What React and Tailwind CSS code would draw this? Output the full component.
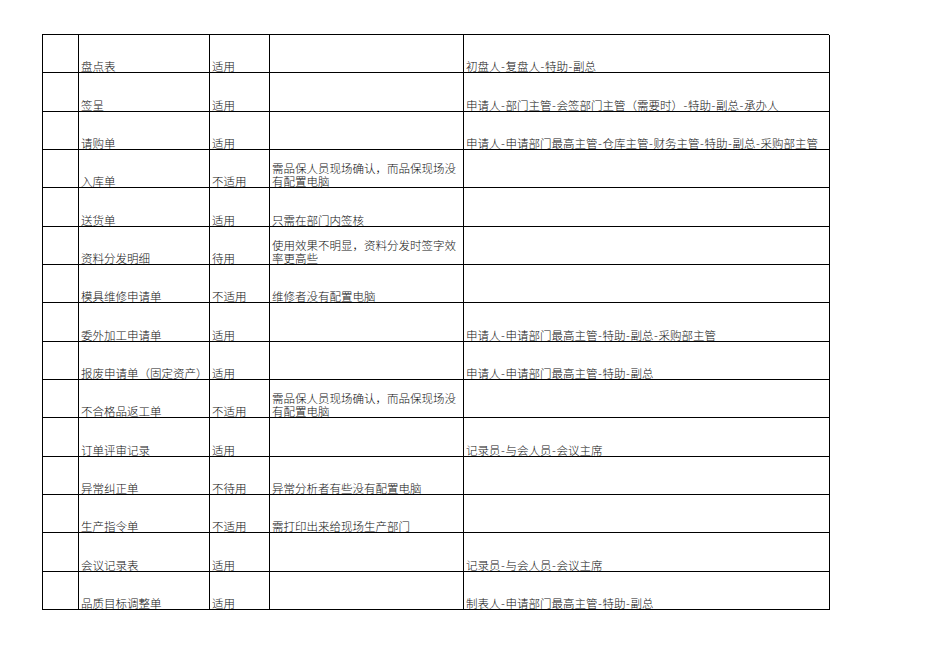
import React from "react";

const rows = [
  ["盘点表", "适用", "", "初盘人-复盘人-特助-副总"],
  ["签呈", "适用", "", "申请人-部门主管-会签部门主管（需要时）-特助-副总-承办人"],
  ["请购单", "适用", "", "申请人-申请部门最高主管-仓库主管-财务主管-特助-副总-采购部主管"],
  ["入库单", "不适用", ["需品保人员现场确认，而品保现场没", "有配置电脑"], ""],
  ["送货单", "适用", "只需在部门内签核", ""],
  ["资料分发明细", "待用", ["使用效果不明显，资料分发时签字效", "率更高些"], ""],
  ["模具维修申请单", "不适用", "维修者没有配置电脑", ""],
  ["委外加工申请单", "适用", "", "申请人-申请部门最高主管-特助-副总-采购部主管"],
  ["报废申请单（固定资产）", "适用", "", "申请人-申请部门最高主管-特助-副总"],
  ["不合格品返工单", "不适用", ["需品保人员现场确认，而品保现场没", "有配置电脑"], ""],
  ["订单评审记录", "适用", "", "记录员-与会人员-会议主席"],
  ["异常纠正单", "不待用", "异常分析者有些没有配置电脑", ""],
  ["生产指令单", "不适用", "需打印出来给现场生产部门", ""],
  ["会议记录表", "适用", "", "记录员-与会人员-会议主席"],
  ["品质目标调整单", "适用", "", "制表人-申请部门最高主管-特助-副总"],
];

// hyphens in the sheet are half-width, wider than the sans one
function Flow({ text }) {
  return text.split("-").map((p, i) => (
    <React.Fragment key={i}>
      {i > 0 && <span className="inline-block w-[5px] text-center">-</span>}
      {p}
    </React.Fragment>
  ));
}

// keep the full-width comma full width
function Note({ text }) {
  return text.split("，").map((p, i) => (
    <React.Fragment key={i}>
      {i > 0 && <span className="inline-block w-[11.5px]">，</span>}
      {p}
    </React.Fragment>
  ));
}

function Cell({ children }) {
  return (
    <div className="flex items-end border-r border-b border-[#000] pl-[2px] whitespace-nowrap leading-[13px]">
      <div className="mb-[-1px]">{children}</div>
    </div>
  );
}

export default function App() {
  return (
    <div className="w-[950px] h-[672px] bg-white pt-[34px] pl-[42px] text-[11.5px] text-[#111] font-['Noto_Sans_CJK_SC',sans-serif] font-light">
      <div className="grid w-[787px] grid-cols-[36px_131px_60px_194px_366px] auto-rows-[38.33px] border-l border-t border-[#000]">
        {rows.map(([name, status, note, flow], i) => (
          <React.Fragment key={i}>
            <Cell />
            <Cell>{name}</Cell>
            <Cell>{status}</Cell>
            <Cell>
              {Array.isArray(note) ? (
                <>
                  <Note text={note[0]} />
                  <br />
                  {note[1]}
                </>
              ) : (
                note
              )}
            </Cell>
            <Cell>{flow && <Flow text={flow} />}</Cell>
          </React.Fragment>
        ))}
      </div>
    </div>
  );
}
